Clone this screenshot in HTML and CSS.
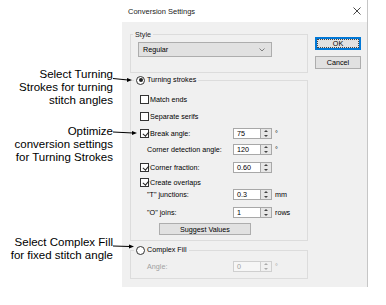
FILE: index.html
```html
<html>
<head>
<title>Conversion Settings</title>
<link rel="stylesheet" href="styles.css">
</head>
<body>
<div class="page">
  <div class="notes">
    <p class="note note-turn">Select Turning<br>Strokes for turning<br>stitch angles</p>
    <p class="note note-opt">Optimize<br>conversion settings<br>for Turning Strokes</p>
    <p class="note note-fill">Select Complex Fill<br>for fixed stitch angle</p>
  </div>

  <div class="dialog">
    <div class="titlebar">
      <span class="title">Conversion Settings</span>
      <svg class="close" width="8" height="8" viewBox="0 0 8 8"><path d="M0.5 0.5 L7.5 7.5 M7.5 0.5 L0.5 7.5" stroke="#333" stroke-width="0.9" fill="none"/></svg>
    </div>
    <div class="dlg-body">
      <div class="groups">
        <fieldset class="group group-style">
          <legend class="legend-style">Style</legend>
          <div class="select">
            <span>Regular</span>
            <svg width="6" height="4" viewBox="0 0 6 4"><path d="M0.5 0.5 L3 3 L5.5 0.5" stroke="#666" stroke-width="0.8" fill="none"/></svg>
          </div>
        </fieldset>

        <fieldset class="group group-turn">
          <legend class="legend-radio"><span class="radio on"></span><span>Turning strokes</span></legend>
          <div class="row r-match"><span class="lbl"><span class="check"></span>Match ends</span></div>
          <div class="row r-serif"><span class="lbl"><span class="check"></span>Separate serifs</span></div>
          <div class="row r-break">
            <span class="lbl"><span class="check on"></span>Break angle:</span>
            <span class="spin"><span class="val">75</span><span class="ud"></span></span>
            <span class="unit">°</span>
          </div>
          <div class="row r-detect indent">
            <span class="lbl">Corner detection angle:</span>
            <span class="spin"><span class="val">120</span><span class="ud"></span></span>
            <span class="unit">°</span>
          </div>
          <div class="row r-frac">
            <span class="lbl"><span class="check on"></span>Corner fraction:</span>
            <span class="spin"><span class="val">0.60</span><span class="ud"></span></span>
          </div>
          <div class="row r-create"><span class="lbl"><span class="check on"></span>Create overlaps</span></div>
          <div class="row r-tjun indent">
            <span class="lbl">"T" junctions:</span>
            <span class="spin"><span class="val">0.3</span><span class="ud"></span></span>
            <span class="unit">mm</span>
          </div>
          <div class="row r-ojoin indent">
            <span class="lbl">"O" joins:</span>
            <span class="spin"><span class="val">1</span><span class="ud"></span></span>
            <span class="unit">rows</span>
          </div>
          <div class="row r-suggest"><button class="btn btn-suggest">Suggest Values</button></div>
        </fieldset>

        <fieldset class="group group-fill">
          <legend class="legend-radio"><span class="radio"></span><span>Complex Fill</span></legend>
          <div class="row r-angle indent disabled">
            <span class="lbl">Angle:</span>
            <span class="spin"><span class="val">0</span><span class="ud"></span></span>
            <span class="unit">°</span>
          </div>
        </fieldset>
      </div>

      <div class="buttons">
        <button class="btn btn-ok">OK</button>
        <button class="btn btn-cancel">Cancel</button>
      </div>
    </div>
  </div>

  <!-- callout arrows -->
  <svg class="arrows" width="386" height="305" viewBox="0 0 386 305">
    <g stroke="#000" stroke-width="1" fill="none">
      <path d="M113 78.5 L128 80"/>
      <path d="M113 132 L133 133"/>
      <path d="M113 246 L130 246.5"/>
    </g>
    <g fill="#000">
      <polygon points="132,80 127,78 127,82"/>
      <polygon points="137,133 132,131 132,135"/>
      <polygon points="134,246.5 129,244.5 129,248.5"/>
    </g>
  </svg>
</div>
</body>
</html>
```

FILE: styles.css
```css
* { box-sizing: border-box; }
body { margin: 0; background: #fff; color: #000; font-family: "Liberation Sans", Arial, sans-serif; }

.page { display: flex; width: 386px; height: 305px; position: relative; }

/* callouts on the left */
.notes { width: 122px; padding-right: 9px; text-align: right; font-size: 11.5px; line-height: 13px; }
.note { margin: 0; }
.note-turn { margin-top: 68px; }
.note-opt { margin-top: 18px; }
.note-fill { margin-top: 72px; }
.arrows { position: absolute; left: 0; top: 0; pointer-events: none; }

/* dialog */
.dialog { width: 246px; height: 287px; border-right: 1px solid #c6c6c6; display: flex; flex-direction: column; font-size: 7.2px; }
.titlebar { height: 22px; background: #fff; display: flex; align-items: center; justify-content: space-between; padding: 0 6px 0 6px; }
.title { font-size: 7.5px; color: #222; }
.close { margin-right: 0; }
.dlg-body { flex: 1; background: #f0f0f0; display: flex; gap: 7px; padding: 8px 6px 8px 8px; }
.groups { width: 178px; }

.group { margin: 0; padding: 0; min-width: 0; border: 1px solid #dcdcdc; }
.group legend { padding: 0 2px; line-height: 9px; height: 9px; }
.legend-style { margin-left: 2px; color: #222; }
.legend-radio { margin-left: 3px; height: 10px !important; line-height: 10px !important; }
.legend-radio span { display: inline-block; vertical-align: middle; }
.legend-radio .radio { margin-right: 2px; }

.group-turn { margin-top: 2px; padding-bottom: 5px; }
.group-fill { margin-top: 4px; padding-bottom: 6px; }

.select { margin: 3px 0 15px 7px; width: 134px; height: 15px; background: #e1e1e1; border: 1px solid #adadad; display: flex; align-items: center; justify-content: space-between; padding: 0 6px 0 4px; }

/* rows */
.row { display: flex; align-items: center; height: 12px; margin-left: 9px; }
.lbl { width: 93px; display: flex; align-items: center; gap: 1px; white-space: nowrap; }
.indent .lbl { padding-left: 7px; }
.r-match { margin-top: 8px; }
.r-serif { margin-top: 5px; }
.r-break { margin-top: 5px; }
.r-detect { margin-top: 4px; }
.r-frac { margin-top: 6px; }
.r-create { margin-top: 3px; }
.r-tjun { margin-top: 0; }
.r-ojoin { margin-top: 6px; }
.r-suggest { margin-top: 5px; }
.r-angle { margin-top: 5px; }

.check { width: 9px; height: 9px; border: 1px solid #333; background: #fff; position: relative; flex: none; }
.check.on::after { content: ""; position: absolute; left: 2.5px; top: 0.5px; width: 2.5px; height: 5px; border-right: 1px solid #222; border-bottom: 1px solid #222; transform: rotate(40deg); }

.radio { width: 9px; height: 9px; border: 1px solid #333; border-radius: 50%; background: #fff; position: relative; }
.radio.on::after { content: ""; position: absolute; left: 1.5px; top: 1.5px; width: 4px; height: 4px; border-radius: 50%; background: #222; }

.spin { width: 39px; height: 11px; display: flex; flex: none; }
.val { flex: 1; background: #fff; border: 1px solid #a8a8a8; border-right: none; padding-left: 3px; line-height: 9px; }
.ud { width: 12px; background: #e6e6e6; border: 1px solid #a8a8a8; position: relative; }
.ud::before, .ud::after { content: ""; position: absolute; left: 3px; border-left: 2.5px solid transparent; border-right: 2.5px solid transparent; }
.ud::before { top: 1px; border-bottom: 2.5px solid #444; }
.ud::after { bottom: 1px; border-top: 2.5px solid #444; }
.unit { margin-left: 3px; }

.disabled { color: #a0a0a0; }
.disabled .val { background: #f6f6f6; border-color: #cfcfcf; }
.disabled .ud { background: #f0f0f0; border-color: #cfcfcf; }
.disabled .ud::before { border-bottom-color: #aaa; }
.disabled .ud::after { border-top-color: #aaa; }

/* buttons */
.buttons { display: flex; flex-direction: column; width: 46px; }
.btn { font-family: inherit; font-size: 7.2px; color: #000; background: #e1e1e1; border: 1px solid #adadad; padding: 0; height: 13px; width: 46px; }
.btn-ok { margin-top: 7px; border-color: #0078d7; box-shadow: inset 0 0 0 1px #0078d7; outline: 1px dotted #444; outline-offset: -3px; }
.btn-cancel { margin-top: 6px; }
.btn-suggest { margin-left: 19px; width: 92px; height: 12px; }
```
